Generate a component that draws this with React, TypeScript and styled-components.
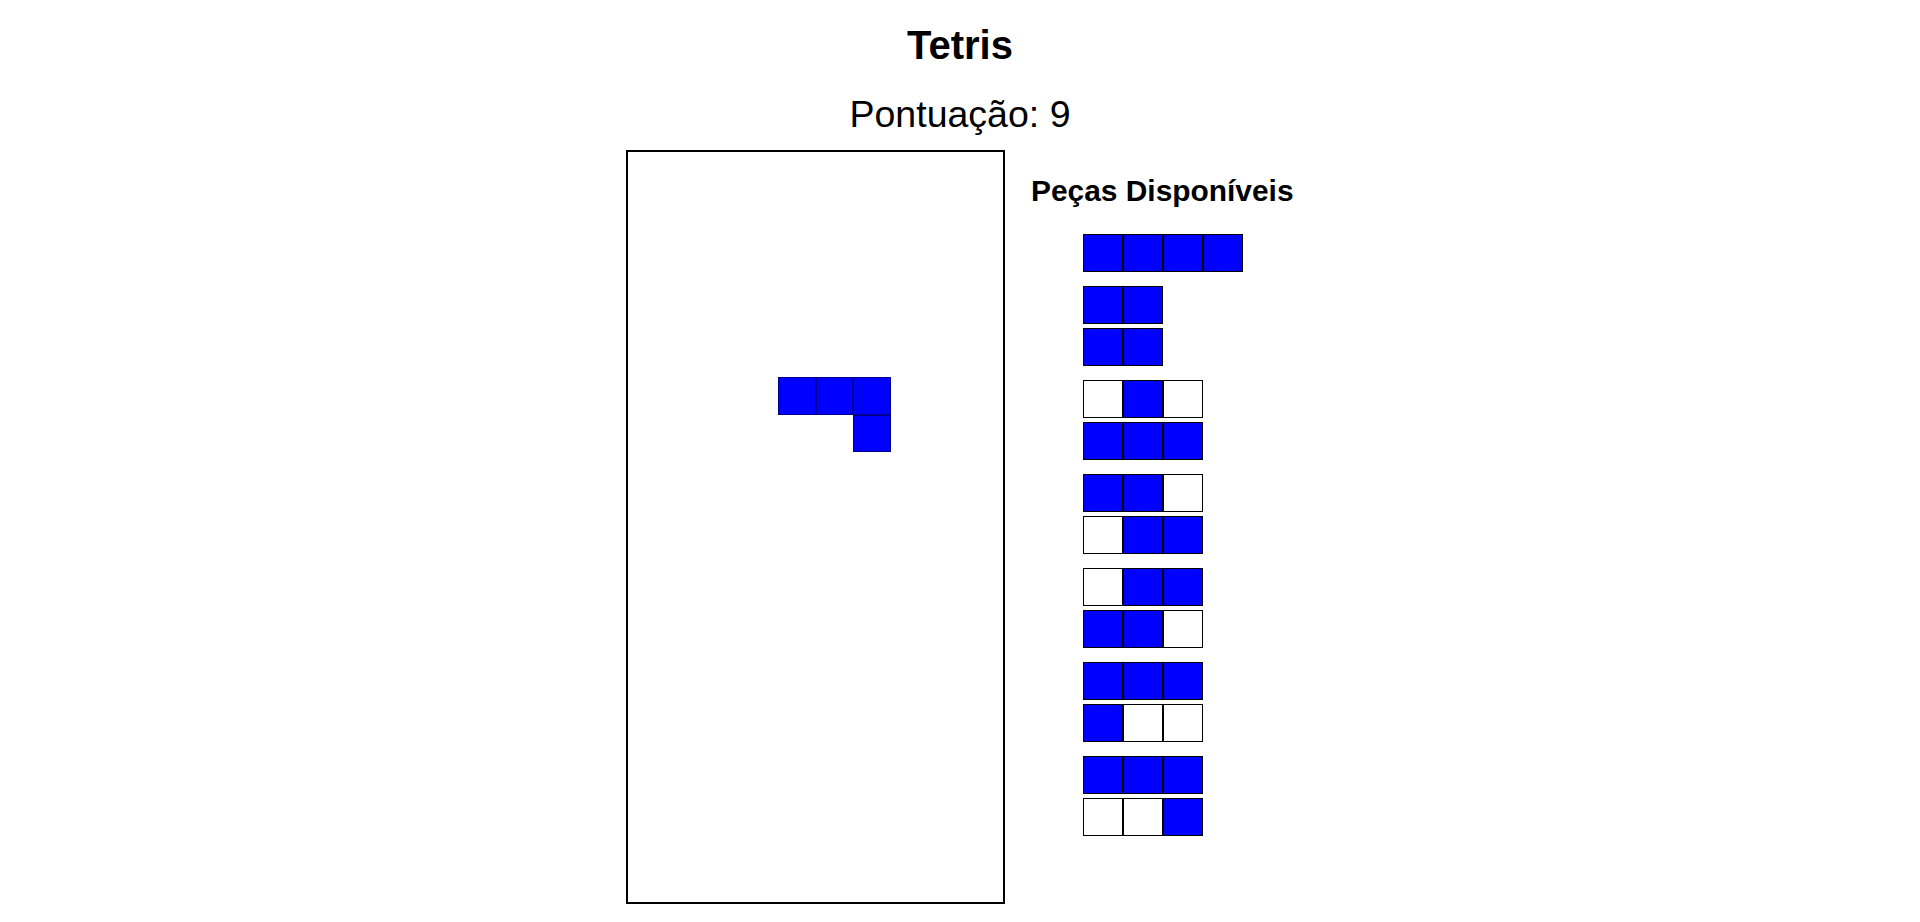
import styled, { createGlobalStyle } from 'styled-components';

const GlobalStyle = createGlobalStyle`
  html, body {
    margin: 0;
    padding: 0;
    background: #ffffff;
  }
  body {
    font-family: 'Liberation Sans', Arial, sans-serif;
    color: #000000;
  }
`;

const SPage = styled.div`
  display: flex;
  flex-direction: column;
  align-items: center;
  padding-top: 25px;
`;

const STitle = styled.h1`
  margin: 0;
  font-size: 40px;
  line-height: 40px;
  font-weight: 700;
`;

const SScore = styled.div`
  margin-top: 31px;
  font-size: 37.5px;
  line-height: 37.5px;
`;

const SGameRow = styled.div`
  display: flex;
  align-items: flex-start;
  gap: 26px;
  margin-top: 16.5px;
`;

const SBoard = styled.div`
  display: grid;
  grid-template-columns: repeat(10, 37.5px);
  grid-template-rows: repeat(20, 37.5px);
  border: 2px solid #000000;
  background: #ffffff;
`;

const SBoardCell = styled.div<{ $row: number; $col: number }>`
  grid-row: ${({ $row }) => $row};
  grid-column: ${({ $col }) => $col};
  background: #0000ff;
  border: 1px solid rgba(0, 0, 0, 0.45);
  box-sizing: border-box;
`;

const SSidePanel = styled.div`
  width: 263px;
  display: flex;
  flex-direction: column;
`;

const SSideTitle = styled.h3`
  margin: 26px 0 0;
  font-size: 29.9px;
  line-height: 30px;
  font-weight: 700;
  white-space: nowrap;
`;

const SPieceList = styled.div`
  display: flex;
  flex-direction: column;
  gap: 14px;
  margin-top: 28px;
  padding-left: 52px;
`;

const SPiece = styled.div`
  display: flex;
  flex-direction: column;
  gap: 4px;
`;

const SPieceRow = styled.div`
  display: flex;
`;

const SPieceCell = styled.div<{ $filled: boolean }>`
  width: 40px;
  height: 38px;
  box-sizing: border-box;
  border: 1px solid #000000;
  background: ${({ $filled }) => ($filled ? '#0000ff' : '#ffffff')};
`;

const fallingPiece = [
  { row: 7, col: 5 },
  { row: 7, col: 6 },
  { row: 7, col: 7 },
  { row: 8, col: 7 },
];

const pieces: number[][][] = [
  [[1, 1, 1, 1]],
  [
    [1, 1],
    [1, 1],
  ],
  [
    [0, 1, 0],
    [1, 1, 1],
  ],
  [
    [1, 1, 0],
    [0, 1, 1],
  ],
  [
    [0, 1, 1],
    [1, 1, 0],
  ],
  [
    [1, 1, 1],
    [1, 0, 0],
  ],
  [
    [1, 1, 1],
    [0, 0, 1],
  ],
];

export default function App() {
  return (
    <>
      <GlobalStyle />
      <SPage>
        <STitle>Tetris</STitle>
        <SScore>Pontuação: 9</SScore>

        <SGameRow>
          <SBoard>
            {fallingPiece.map((c) => (
              <SBoardCell key={`${c.row}-${c.col}`} $row={c.row} $col={c.col} />
            ))}
          </SBoard>

          <SSidePanel>
            <SSideTitle>Peças Disponíveis</SSideTitle>
            <SPieceList>
              {pieces.map((shape, i) => (
                <SPiece key={i}>
                  {shape.map((row, r) => (
                    <SPieceRow key={r}>
                      {row.map((v, c) => (
                        <SPieceCell key={c} $filled={v === 1} />
                      ))}
                    </SPieceRow>
                  ))}
                </SPiece>
              ))}
            </SPieceList>
          </SSidePanel>
        </SGameRow>
      </SPage>
    </>
  );
}
